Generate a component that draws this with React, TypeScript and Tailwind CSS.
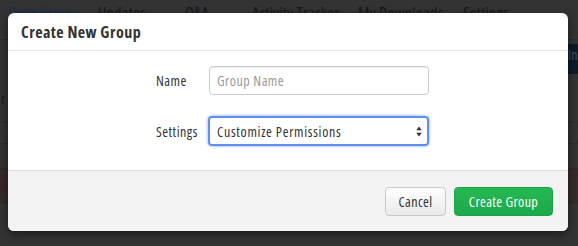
const tabs = [
  { label: 'Permissions', cls: 'w-[90px] text-[#17324d]' },
  { label: 'Updates', cls: 'w-[87px] text-[#161616]' },
  { label: 'Q&A', cls: 'w-[67px] text-[#161616]' },
  { label: 'Activity Tracker', cls: 'w-[106px] text-[#161616]' },
  { label: 'My Downloads', cls: 'w-[105px] text-[#161616]' },
  { label: 'Settings', cls: 'w-[60px] text-[#161616]' },
];

const SelectArrows = () => (
  <svg width="6" height="11" viewBox="0 0 6 11" aria-hidden="true">
    <path d="M3 0.5 L5.7 4.3 H0.3 Z" fill="#333" />
    <path d="M3 10.5 L5.7 6.7 H0.3 Z" fill="#333" />
  </svg>
);

const App = () => {
  return (
    <div className="relative w-[578px] h-[246px] overflow-hidden bg-[#333] font-['Open_Sans',sans-serif] [font-stretch:75%]">
      {/* page behind the overlay */}
      <div className="flex flex-col h-full">
        <div className="flex h-[40px] pl-[8px] border-b border-[#2b2b2b] text-[16px] leading-[20px] pt-[3px] whitespace-nowrap tracking-[0.3px]">
          {tabs.map((t) => (
            <span key={t.label} className={`shrink-0 ${t.cls}`}>
              {t.label}
            </span>
          ))}
        </div>
        <div className="flex justify-end h-[30px] mt-[4px]">
          <div className="w-[12px] bg-[#0e1b2b] text-[#3a4a5e] text-[14px] pl-[2px] overflow-hidden">In</div>
        </div>
        <div className="flex h-[49px] items-center text-[#1a1a1a] text-[14px] border-b border-[#2a2a2a]">
          <span className="ml-[1px]">r</span>
        </div>
        <div className="h-[21px] border-b border-[#2a2a2a]" />
        <div className="h-[25px] border-b border-[#2a2a2a]" />
        <div className="h-[35px] bg-[#362b2b] flex items-center text-[#4a1c1c] text-[14px]">
          <span>th</span>
        </div>
      </div>

      {/* modal */}
      <div className="absolute left-[8px] top-[13px] w-[560px] h-[218px] bg-white rounded-[6px] shadow-[0_3px_9px_rgba(0,0,0,0.5)] flex flex-col overflow-hidden">
        <div className="h-[38px] px-[13px] flex items-center border-b border-[#e5e5e5] shrink-0">
          <h3 className="text-[16px] font-bold text-[#333] leading-none tracking-[0.45px]">Create New Group</h3>
        </div>
        <div className="flex-1 pt-[15px] pl-[148px] flex flex-col gap-[21px] text-[14px] tracking-[0.5px]">
          <div className="flex items-center h-[29px]">
            <label className="w-[53px] text-[#333]">Name</label>
            <input
              placeholder="Group Name"
              className="w-[220px] h-[29px] rounded-[4px] border border-[#ccc] px-[7px] text-[14px] tracking-[0.5px] text-[#333] placeholder:text-[#999] outline-none shadow-[inset_0_1px_1px_rgba(0,0,0,0.075)] [font-stretch:75%]"
            />
          </div>
          <div className="flex items-center h-[30px]">
            <label className="w-[53px] text-[#333]">Settings</label>
            <div className="w-[221px] h-[30px] -ml-[1px] rounded-[4px] border-2 border-[#5f8ff5] shadow-[0_0_3px_rgba(82,130,240,0.8)] flex items-center justify-between pl-[7px] pr-[5px] text-[#333]">
              <span className="tracking-[0.7px]">Customize Permissions</span>
              <SelectArrows />
            </div>
          </div>
        </div>
        <div className="h-[61px] shrink-0 bg-[#f3f3f3] border-t border-[#ddd] flex items-center justify-end gap-[8px] pr-[15px]">
          <button className="w-[61px] h-[29px] rounded-[4px] border border-[#c8c8c8] bg-gradient-to-b from-white to-[#e8e8e8] text-[14px] tracking-[0.4px] text-[#333] [font-stretch:75%]">
            Cancel
          </button>
          <button className="w-[99px] h-[29px] rounded-[4px] border border-[#1aa447] bg-gradient-to-b from-[#24b953] to-[#1ca94b] text-[14px] tracking-[0.4px] text-white [font-stretch:75%]">
            Create Group
          </button>
        </div>
      </div>
    </div>
  );
};

export default App;
